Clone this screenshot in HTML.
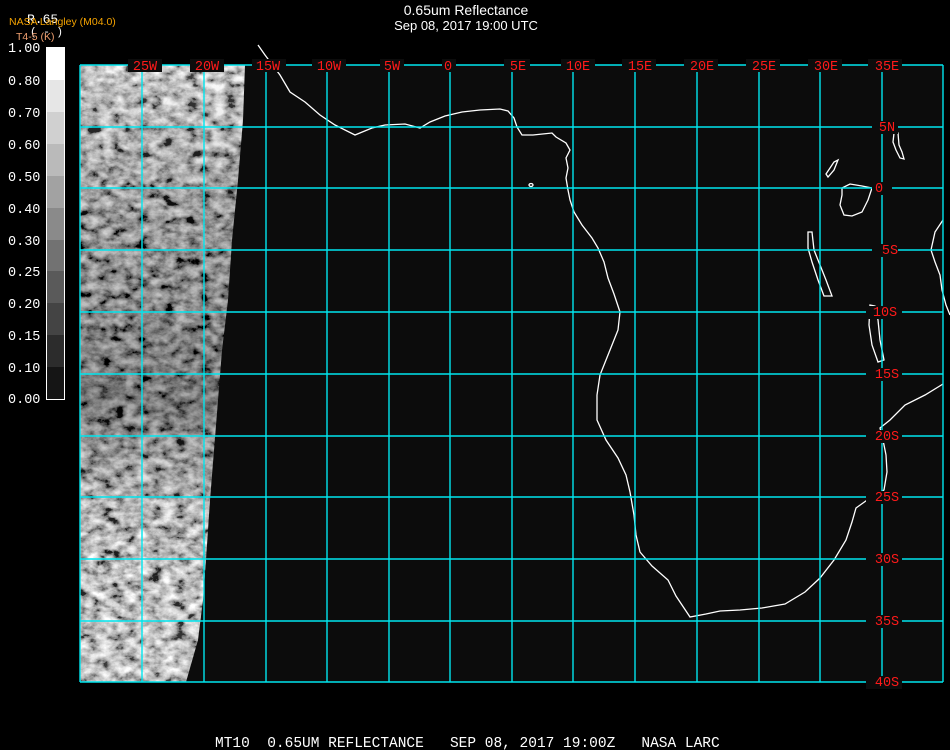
<!DOCTYPE html>
<html><head><meta charset="utf-8"><style>
html,body{margin:0;padding:0;background:#000;width:950px;height:750px;overflow:hidden}
body{position:relative;font-family:"Liberation Sans",sans-serif}
.t{position:absolute;color:#fff;font-size:13px;white-space:nowrap}
.m{position:absolute;font-family:"Liberation Mono",monospace;white-space:nowrap}
</style></head><body>
<div class="t" style="left:0;width:932px;text-align:center;top:2px;font-size:14px">0.65um Reflectance</div>
<div class="t" style="left:0;width:932px;text-align:center;top:18px;font-size:13px">Sep 08, 2017 19:00 UTC</div>
<div class="m" style="left:27px;top:12px;color:#fff;font-size:13px">R.65</div>
<div class="m" style="left:30px;top:27px;color:#fff;font-size:11px">( - )</div>
<div class="t" style="left:9px;top:16px;color:#f5a300;font-size:10.5px">NASA Langley (M04.0)</div>
<div class="t" style="left:16px;top:31px;color:#f0a070;font-size:10.5px">T4-5 (K)</div>
<svg width="950" height="750" style="position:absolute;left:0;top:0">
<defs>
<filter id="n" x="0" y="0" width="100%" height="100%">
<feTurbulence type="fractalNoise" baseFrequency="0.08 0.12" numOctaves="5" seed="7"/>
<feColorMatrix type="matrix" values="1.3 1.3 0 0 -0.85  1.3 1.3 0 0 -0.85  1.3 1.3 0 0 -0.85  0 0 0 0 1"/>
</filter>
<linearGradient id="g" x1="0" y1="0" x2="0" y2="1">
<stop offset="0" stop-color="#fff" stop-opacity="0.25"/>
<stop offset="0.3" stop-color="#000" stop-opacity="0.2"/>
<stop offset="0.55" stop-color="#000" stop-opacity="0.35"/>
<stop offset="0.8" stop-color="#fff" stop-opacity="0.1"/>
<stop offset="1" stop-color="#fff" stop-opacity="0.25"/>
</linearGradient>
<clipPath id="c"><polygon points="80,65 245,65 243,120 238,180 232,240 228,300 222,350 218,400 214,450 210,500 206,560 203,600 198,640 186,682 80,682"/></clipPath>
</defs>
<rect x="80" y="65" width="863" height="617" fill="#0c0c0c"/>
<g clip-path="url(#c)"><rect x="80" y="65" width="170" height="617" filter="url(#n)"/><rect x="80" y="65" width="170" height="617" fill="url(#g)"/></g>
<g fill="none" stroke="#fff" stroke-width="1.3">
<polyline points="258,45 265,55 280,75 290,92 305,102 320,115 335,125 355,135 372,128 385,125 405,124 420,128 430,122 445,116 462,112 480,110 500,109 508,111 514,118 517,127 522,135 533,135 552,133 556,137 566,143 570,150 566,158 568,168 566,178 568,190 570,200 574,212 582,225 592,238 598,248 604,262 608,278 614,294 620,312 618,330 612,345 606,360 600,375 597,395 597,420 606,440 618,458 626,475 630,492 634,515 636,535 640,552 652,566 668,580 676,596 690,617 706,614 720,611 740,610 762,608 785,604 805,592 820,578 834,560 846,540 852,522 856,508 870,498 884,490 887,472 886,455 883,440 880,428 890,420 905,405 925,395 943,384"/>
<polyline points="943,220 935,232 931,250 935,262 940,275 942,290 946,305 950,315"/>
<polygon points="842,188 850,184 862,186 872,188 868,200 862,212 852,216 844,215 840,205 842,195"/>
<polygon points="808,232 812,232 814,250 820,265 826,280 832,296 824,296 818,280 812,262 808,248"/>
<polygon points="870,305 875,306 878,320 880,340 884,360 878,362 872,345 869,325"/>
<polygon points="894,133 898,133 899,145 902,152 904,159 900,158 896,150 893,142"/>
<polygon points="826,174 834,162 838,160 834,170 828,177"/>
<ellipse cx="531" cy="185" rx="2" ry="1.5"/>
</g>
<g stroke="#00e5ee" stroke-width="1.4">
<line x1="80" y1="65" x2="943" y2="65"/>
<line x1="80" y1="127" x2="943" y2="127"/><line x1="80" y1="188" x2="943" y2="188"/>
<line x1="80" y1="250" x2="943" y2="250"/><line x1="80" y1="312" x2="943" y2="312"/>
<line x1="80" y1="374" x2="943" y2="374"/><line x1="80" y1="436" x2="943" y2="436"/>
<line x1="80" y1="497" x2="943" y2="497"/><line x1="80" y1="559" x2="943" y2="559"/>
<line x1="80" y1="621" x2="943" y2="621"/><line x1="80" y1="682" x2="943" y2="682"/>
<line x1="80" y1="65" x2="80" y2="682"/><line x1="142" y1="65" x2="142" y2="682"/>
<line x1="204" y1="65" x2="204" y2="682"/><line x1="266" y1="65" x2="266" y2="682"/>
<line x1="327" y1="65" x2="327" y2="682"/><line x1="389" y1="65" x2="389" y2="682"/>
<line x1="450" y1="65" x2="450" y2="682"/><line x1="512" y1="65" x2="512" y2="682"/>
<line x1="573" y1="65" x2="573" y2="682"/><line x1="635" y1="65" x2="635" y2="682"/>
<line x1="697" y1="65" x2="697" y2="682"/><line x1="759" y1="65" x2="759" y2="682"/>
<line x1="820" y1="65" x2="820" y2="682"/><line x1="882" y1="65" x2="882" y2="682"/>
<line x1="943" y1="65" x2="943" y2="682"/>
</g>
<g fill="#0c0c0c">
<rect x="128" y="59" width="34" height="13"/><rect x="190" y="59" width="34" height="13"/><rect x="252" y="59" width="34" height="13"/><rect x="312" y="59" width="34" height="13"/><rect x="380" y="59" width="24" height="13"/><rect x="442" y="59" width="14" height="13"/><rect x="504" y="59" width="26" height="13"/><rect x="561" y="59" width="34" height="13"/><rect x="622" y="59" width="34" height="13"/><rect x="684" y="59" width="34" height="13"/><rect x="746" y="59" width="34" height="13"/><rect x="808" y="59" width="34" height="13"/><rect x="868" y="59" width="34" height="13"/>
<rect x="872" y="121" width="26" height="13"/><rect x="872" y="182" width="20" height="13"/><rect x="872" y="244" width="26" height="13"/><rect x="866" y="306" width="36" height="13"/><rect x="866" y="368" width="36" height="13"/><rect x="866" y="430" width="36" height="13"/><rect x="866" y="491" width="36" height="13"/><rect x="866" y="553" width="36" height="13"/><rect x="866" y="615" width="36" height="13"/><rect x="866" y="676" width="36" height="13"/>
</g>
<g fill="#ff1a1a" font-family="Liberation Mono, monospace" font-size="13.5" text-anchor="middle">
<text x="145" y="70">25W</text><text x="207" y="70">20W</text><text x="268" y="70">15W</text><text x="329" y="70">10W</text><text x="392" y="70">5W</text><text x="448" y="70">0</text><text x="518" y="70">5E</text><text x="578" y="70">10E</text><text x="640" y="70">15E</text><text x="702" y="70">20E</text><text x="764" y="70">25E</text><text x="826" y="70">30E</text><text x="887" y="70">35E</text>
<text x="887" y="131">5N</text><text x="879" y="192">0</text><text x="890" y="254">5S</text><text x="885" y="316">10S</text><text x="887" y="378">15S</text><text x="887" y="440">20S</text><text x="887" y="501">25S</text><text x="887" y="563">30S</text><text x="887" y="625">35S</text><text x="887" y="686">40S</text>
</g>
<g>
<rect x="46" y="47" width="18" height="33" fill="#fff"/>
<rect x="46" y="80" width="18" height="32" fill="#e6e6e6"/>
<rect x="46" y="112" width="18" height="32" fill="#d0d0d0"/>
<rect x="46" y="144" width="18" height="32" fill="#bababa"/>
<rect x="46" y="176" width="18" height="32" fill="#a2a2a2"/>
<rect x="46" y="208" width="18" height="32" fill="#8a8a8a"/>
<rect x="46" y="240" width="18" height="31" fill="#727272"/>
<rect x="46" y="271" width="18" height="32" fill="#5a5a5a"/>
<rect x="46" y="303" width="18" height="32" fill="#444"/>
<rect x="46" y="335" width="18" height="32" fill="#2c2c2c"/>
<rect x="46" y="367" width="18" height="32" fill="#151515"/>
<rect x="46.5" y="47.5" width="18" height="352" fill="none" stroke="#fff" stroke-width="1"/>
</g>
<g fill="#fff" font-family="Liberation Mono, monospace" font-size="13.5">
<text x="8" y="52">1.00</text><text x="8" y="85">0.80</text><text x="8" y="117">0.70</text><text x="8" y="149">0.60</text><text x="8" y="181">0.50</text><text x="8" y="213">0.40</text><text x="8" y="245">0.30</text><text x="8" y="276">0.25</text><text x="8" y="308">0.20</text><text x="8" y="340">0.15</text><text x="8" y="372">0.10</text><text x="8" y="403">0.00</text>
</g>
<text x="215" y="747" fill="#fff" font-family="Liberation Mono, monospace" font-size="14.5" xml:space="preserve">MT10  0.65UM REFLECTANCE   SEP 08, 2017 19:00Z   NASA LARC</text>
</svg>
</body></html>
